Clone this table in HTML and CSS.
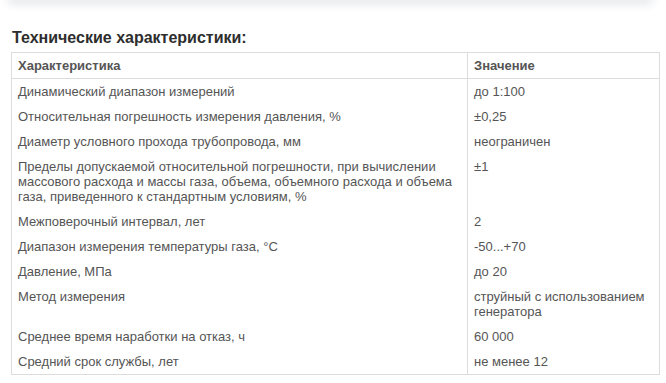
FILE: index.html
```html
<!DOCTYPE html>
<html lang="ru">
<head>
<meta charset="utf-8">
<title>Технические характеристики</title>
<link rel="stylesheet" href="styles.css">
</head>
<body>
<div class="topbar"></div>
<h2 class="title">Технические характеристики:</h2>
<table class="specs">
  <thead>
    <tr><th class="c1">Характеристика</th><th class="c2">Значение</th></tr>
  </thead>
  <tbody>
    <tr><td>Динамический диапазон измерений</td><td>до 1:100</td></tr>
    <tr><td>Относительная погрешность измерения давления, %</td><td>±0,25</td></tr>
    <tr><td>Диаметр условного прохода трубопровода, мм</td><td>неограничен</td></tr>
    <tr><td>Пределы допускаемой относительной погрешности, при вычислении массового расхода и массы газа, объема, объемного расхода и объема газа, приведенного к стандартным условиям, %</td><td>±1</td></tr>
    <tr><td>Межповерочный интервал, лет</td><td>2</td></tr>
    <tr><td>Диапазон измерения температуры газа, °C</td><td>-50...+70</td></tr>
    <tr><td>Давление, МПа</td><td>до 20</td></tr>
    <tr><td>Метод измерения</td><td>струйный с использованием генератора</td></tr>
    <tr><td>Среднее время наработки на отказ, ч</td><td>60 000</td></tr>
    <tr><td>Средний срок службы, лет</td><td>не менее 12</td></tr>
  </tbody>
</table>
</body>
</html>
```
FILE: styles.css
```css
html, body {
  margin: 0;
  padding: 0;
  background: #fff;
}
body {
  font-family: "Liberation Sans", Arial, sans-serif;
  color: #555;
  overflow: hidden;
}
.topbar {
  height: 6px;
  margin: -6px 14px 0 8px;
  background: #fff;
  box-shadow: 0 3px 10px rgba(40, 60, 90, 0.18);
}
.title {
  margin: 29px 0 5px 12px;
  font-size: 16px;
  line-height: 18px;
  font-weight: bold;
  color: #2e2e2e;
}
.specs {
  margin-left: 11px;
  width: 649px;
  border-collapse: collapse;
  border: 1px solid #dcdcdc;
  font-size: 13px;
  line-height: 15px;
}
.specs th, .specs td {
  padding: 5px 6px;
  text-align: left;
  vertical-align: top;
}
.specs th {
  font-weight: bold;
  color: #555;
  border-bottom: 1px solid #dcdcdc;
}
.specs th.c1, .specs td:first-child {
  width: 443px;
  border-right: 1px solid #dcdcdc;
}
```
